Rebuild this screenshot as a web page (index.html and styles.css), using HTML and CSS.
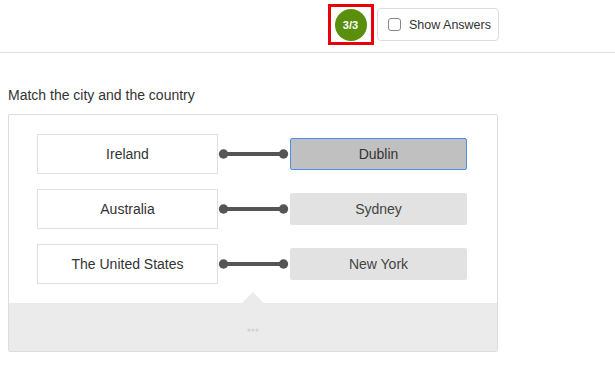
FILE: index.html
```html
<!DOCTYPE html>
<html>
<head>
<meta charset="utf-8">
<link rel="stylesheet" href="styles.css">
</head>
<body>
<header class="topbar">
  <div class="badge-frame"><div class="badge">3/3</div></div>
  <label class="show-answers"><span class="checkbox"></span>Show Answers</label>
</header>
<main class="content">
  <p class="question">Match the city and the country</p>
  <section class="card">
    <div class="rows">
      <div class="row">
        <div class="left-item">Ireland</div>
        <svg class="connector" width="72" height="12" viewBox="0 0 72 12"><line x1="5.5" y1="6" x2="65.5" y2="6" stroke="#555" stroke-width="4"/><circle cx="5.5" cy="6" r="4.7" fill="#555"/><circle cx="65.5" cy="6" r="4.7" fill="#555"/></svg>
        <div class="right-item selected">Dublin</div>
      </div>
      <div class="row">
        <div class="left-item">Australia</div>
        <svg class="connector" width="72" height="12" viewBox="0 0 72 12"><line x1="5.5" y1="6" x2="65.5" y2="6" stroke="#555" stroke-width="4"/><circle cx="5.5" cy="6" r="4.7" fill="#555"/><circle cx="65.5" cy="6" r="4.7" fill="#555"/></svg>
        <div class="right-item">Sydney</div>
      </div>
      <div class="row">
        <div class="left-item">The United States</div>
        <svg class="connector" width="72" height="12" viewBox="0 0 72 12"><line x1="5.5" y1="6" x2="65.5" y2="6" stroke="#555" stroke-width="4"/><circle cx="5.5" cy="6" r="4.7" fill="#555"/><circle cx="65.5" cy="6" r="4.7" fill="#555"/></svg>
        <div class="right-item">New York</div>
      </div>
    </div>
    <div class="pool">
      <span class="notch"></span>
      <svg class="dots" width="12" height="4" viewBox="0 0 12 4"><circle cx="2" cy="2" r="1.6" fill="#d2d2d2"/><circle cx="6" cy="2" r="1.6" fill="#d2d2d2"/><circle cx="10" cy="2" r="1.6" fill="#d2d2d2"/></svg>
    </div>
  </section>
</main>
</body>
</html>
```
FILE: styles.css
```css
* { box-sizing: border-box; }
body {
  margin: 0;
  background: #fff;
  font-family: "Liberation Sans", Arial, sans-serif;
  color: #333;
  width: 615px;
  height: 365px;
  overflow: hidden;
}
.topbar {
  height: 53px;
  border-bottom: 1px solid #e0e0e0;
  display: flex;
  justify-content: flex-end;
  align-items: flex-start;
  padding-right: 116px;
}
.badge-frame {
  margin-top: 4px;
  width: 46px;
  height: 41px;
  border: 3px solid #e8000b;
  display: flex;
  align-items: center;
  justify-content: center;
}
.badge {
  width: 32px;
  height: 32px;
  border-radius: 50%;
  background: #5a8f0e;
  color: #fff;
  font-size: 11px;
  font-weight: bold;
  display: flex;
  align-items: center;
  justify-content: center;
  margin-left: -1px;
}
.show-answers {
  margin-top: 8px;
  margin-left: 3px;
  width: 122px;
  height: 33px;
  border: 1px solid #ddd;
  border-radius: 4px;
  display: flex;
  align-items: center;
  padding-left: 10px;
  font-size: 12.5px;
  color: #333;
}
.checkbox {
  width: 13px;
  height: 13px;
  border: 1px solid #888;
  border-radius: 3px;
  background: #fff;
  margin-right: 8px;
}
.content {
  padding: 0 8px;
}
.question {
  margin: 34px 0 10px 0;
  font-size: 14px;
  line-height: 17px;
  color: #333;
}
.card {
  width: 490px;
  border: 1px solid #ddd;
  border-radius: 2px;
}
.rows {
  padding: 19px 0 19px 28px;
  display: flex;
  flex-direction: column;
  gap: 15px;
}
.row {
  display: flex;
  align-items: center;
}
.left-item {
  width: 181px;
  height: 40px;
  border: 1px solid #e0e0e0;
  display: flex;
  align-items: center;
  justify-content: center;
  font-size: 14px;
  color: #333;
}
.connector { display: block; flex: none; }
.right-item {
  width: 177px;
  height: 32px;
  background: #e2e2e2;
  border-radius: 2px;
  display: flex;
  align-items: center;
  justify-content: center;
  font-size: 14px;
  color: #444;
}
.right-item.selected {
  background: #c0c0c0;
  border: 1px solid #4a90e2;
  color: #333;
}
.pool {
  position: relative;
  height: 48px;
  background: #ebebeb;
  display: flex;
  align-items: center;
  justify-content: center;
  padding-top: 6px;
}
.notch {
  position: absolute;
  top: -11px;
  left: 233px;
  width: 0;
  height: 0;
  border-left: 11px solid transparent;
  border-right: 11px solid transparent;
  border-bottom: 11px solid #ebebeb;
}
.dots { display: block; }
```
